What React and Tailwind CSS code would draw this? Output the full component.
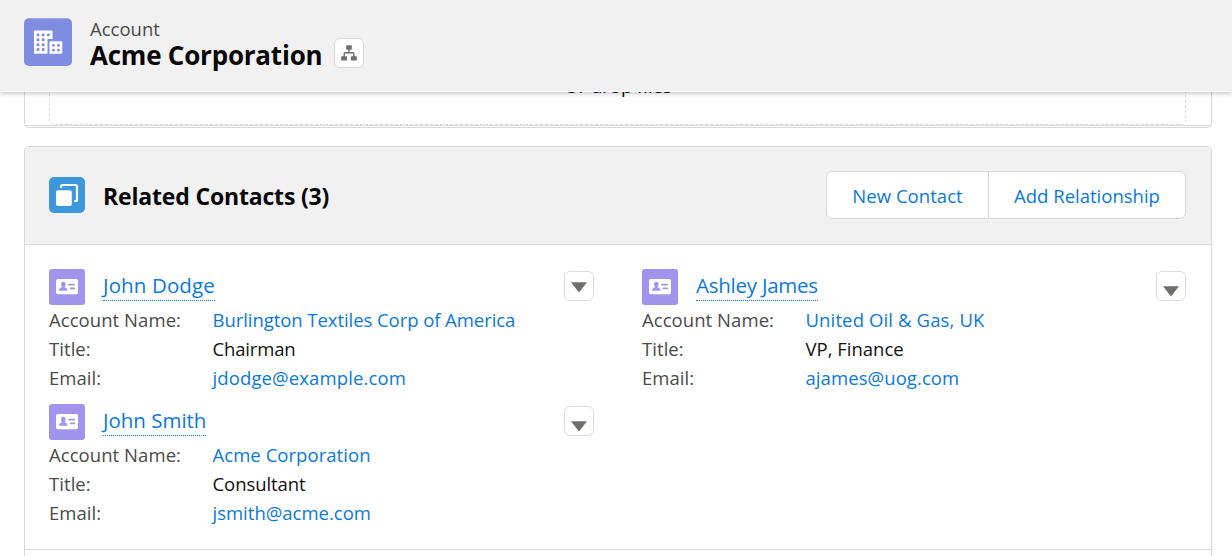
const BLUE = "text-[#0b79d8]";

function AccountIcon() {
  const dots = [];
  for (let r = 0; r < 4; r++) for (let c = 0; c < 3; c++) {
    if (r > 0 && c === 2) continue;
    dots.push([12.5 + c * 5.2, 15.7 + r * 4.9]);
  }
  return (
    <svg className="size-12 shrink-0" viewBox="0 0 48 48">
      <rect y="0.300" width="48" height="47.700" rx="5" fill="#7f8de1" />
      <path d="M11 12.500h16.500q1 0 1 1V21h-5v14.800H10V13.500q0-1 1-1zM26.500 23.200h10.800q1 0 1 1v10.600q0 1-1 1H25.500V24.200q0-1 1-1z" fill="#fff" />
      {dots.map(([x, y], i) => <rect key={i} x={x} y={y - 0.3} width="3" height="3" rx="1.300" fill="#7f8de1" />)}
      <g fill="#7f8de1">
        <rect x="28" y="26" width="2.800" height="2.800" rx="1.200" />
        <rect x="33" y="26" width="2.800" height="2.800" rx="1.200" />
        <rect x="28" y="30.700" width="2.800" height="2.800" rx="1.200" />
        <rect x="33" y="30.700" width="2.800" height="2.800" rx="1.200" />
      </g>
    </svg>
  );
}

function HierarchyIcon() {
  return (
    <svg className="size-4" viewBox="0 0 16 16">
      <g fill="#706e6b">
        <rect x="5.200" y="0.300" width="5.600" height="4.400" rx="0.600" />
        <rect x="0.200" y="11.300" width="5.800" height="4.200" rx="0.600" />
        <rect x="10" y="11.300" width="5.800" height="4.200" rx="0.600" />
      </g>
      <path d="M8 4v3.700M3.200 12V8.500q0-.8.8-.8h8q.8 0 .8.800V12" fill="none" stroke="#706e6b" strokeWidth="1.400" />
    </svg>
  );
}

function RelatedIcon() {
  return (
    <svg className="size-9 shrink-0" viewBox="0 0 36 36">
      <rect width="36" height="36" rx="5" fill="#3c97dd" />
      <rect x="7" y="13.200" width="15.800" height="15.800" rx="2" fill="#fff" />
      <path d="M12 10V9.500Q12 8 13.500 8H26.500Q28 8 28 9.500V22.500Q28 24 26.500 24H26.200" fill="none" stroke="#fff" strokeWidth="2.200" strokeLinecap="round" />
    </svg>
  );
}

function ContactIcon() {
  return (
    <svg className="size-9 shrink-0" viewBox="0 0 36 36">
      <rect width="36" height="36" rx="3" fill="#a094ed" />
      <rect x="7" y="10" width="22" height="15.200" rx="2" fill="#fff" />
      <ellipse cx="14.300" cy="15.400" rx="2.300" ry="2.600" fill="#a094ed" />
      <path d="M13 16h2.600v2.300q2.900.8 2.900 3.400h-8.400q0-2.600 2.900-3.400z" fill="#a094ed" />
      <path d="M20 15.600h5.200M21.600 19.400h3.600" stroke="#a094ed" strokeWidth="1.900" strokeLinecap="round" />
    </svg>
  );
}

function MenuButton({ low }) {
  return (
    <button className={"flex size-[30px] justify-center rounded-[6px] border border-[#dddbda] bg-white " + (low ? "pt-[14px]" : "pt-[10px]")}>
      <svg className="h-[11px] w-4" viewBox="0 0 16 11"><path d="M0 0.300h16L8 10.600z" fill="#706e6b" /></svg>
    </button>
  );
}

function Contact({ name, nameClass, rows, low, width = "w-[545px]" }) {
  return (
    <article className={"h-[135px] " + width}>
      <div className="flex h-9 items-start">
        <ContactIcon />
        <a className={"ml-[18px] h-8 whitespace-nowrap border-b border-dotted border-[#0b79d8] leading-[33px] " + BLUE + " " + nameClass}>{name}</a>
        <div className="ml-auto pt-[2px]"><MenuButton low={low} /></div>
      </div>
      <dl className="grid grid-cols-[163.500px_1fr] text-[18.500px] leading-[29px]">
        {rows.map(([label, value, valueClass]) => (
          <div key={label} className="col-span-2 grid h-[29px] grid-cols-subgrid whitespace-nowrap">
            <dt className="tracking-[0.060px] text-[#4a4a49]">{label}</dt>
            <dd className={(label === "Title:" ? "text-[#111]" : BLUE) + " " + valueClass}>{value}</dd>
          </div>
        ))}
      </dl>
    </article>
  );
}

export default function App() {
  return (
    <div className="relative h-[556px] w-[1232px] overflow-hidden bg-white font-['Open_Sans',sans-serif] text-[18.500px]">
      <header className="relative z-10 flex h-[92px] border-b border-white bg-[#f1f1f1] pl-6 pt-[18px] shadow-[0_2px_4px_rgba(0,0,0,0.2)]">
        <AccountIcon />
        <div className="ml-[18px] whitespace-nowrap">
          <div className="h-[22px] leading-[22px] text-[#4a4a49]">Account</div>
          <h1 className="w-[232px] text-[26px] font-bold leading-[31px] tracking-[-0.220px] text-[#080707]">Acme Corporation</h1>
        </div>
        <button className="ml-3 mt-5 flex size-[30px] items-center justify-center rounded-[6px] border border-[#dddbda] bg-white"><HierarchyIcon /></button>
      </header>
      <section className="-mt-4 ml-6 mr-5 h-[52px] rounded-b-[5px] border border-t-0 border-[#d8d8d8]">
        <div className="h-[50px] border-b border-[#d8d8d8] pl-6 pr-[25px]">
          <div className="h-[49px] rounded-b-[5px] border border-t-0 border-dashed border-[#d8d8d8] pl-px text-center leading-[19px] text-[#080707]">Or drop files</div>
        </div>
      </section>
      <section className="ml-6 mr-5 mt-[18px] h-[430px] rounded-[5px] border border-[#d8d8d8]">
        <div className="flex h-[98px] items-start rounded-t-[4px] border-b border-[#d8d8d8] bg-[#f1f1f1] pl-6 pr-[25px] pt-6">
          <div className="pt-[6px]"><RelatedIcon /></div>
          <h2 className="ml-[18px] text-[23px] font-bold leading-[50px] tracking-[-0.170px] text-[#080707]">Related Contacts (3)</h2>
          <div className={"ml-auto flex h-12 rounded-[6px] border border-[#d8d8d8] bg-white leading-[48px] " + BLUE}>
            <button className="w-[162px] border-r border-[#d8d8d8] tracking-[0.060px]">New Contact</button>
            <button className="w-[196px]">Add Relationship</button>
          </div>
        </div>
        <div className="grid h-[305px] grid-cols-[593px_1fr] content-start border-b border-[#d8d8d8] pl-6 pt-6">
          <Contact name="John Dodge" nameClass="text-[20.500px] tracking-[0.120px]" rows={[["Account Name:", "Burlington Textiles Corp of America", "tracking-[-0.060px]"], ["Title:", "Chairman", "tracking-[-0.150px]"], ["Email:", "jdodge@example.com", "tracking-[0.120px]"]]} />
          <Contact low width="w-[544px]" name="Ashley James" nameClass="text-[20.500px] tracking-[-0.240px]" rows={[["Account Name:", "United Oil & Gas, UK", "tracking-[0.130px]"], ["Title:", "VP, Finance", ""], ["Email:", "ajames@uog.com", "tracking-[0.080px]"]]} />
          <Contact low name="John Smith" nameClass="text-[20.500px] tracking-[-0.020px]" rows={[["Account Name:", "Acme Corporation", "tracking-[0.050px]"], ["Title:", "Consultant", "tracking-[-0.070px]"], ["Email:", "jsmith@acme.com", ""]]} />
        </div>
      </section>
    </div>
  );
}
